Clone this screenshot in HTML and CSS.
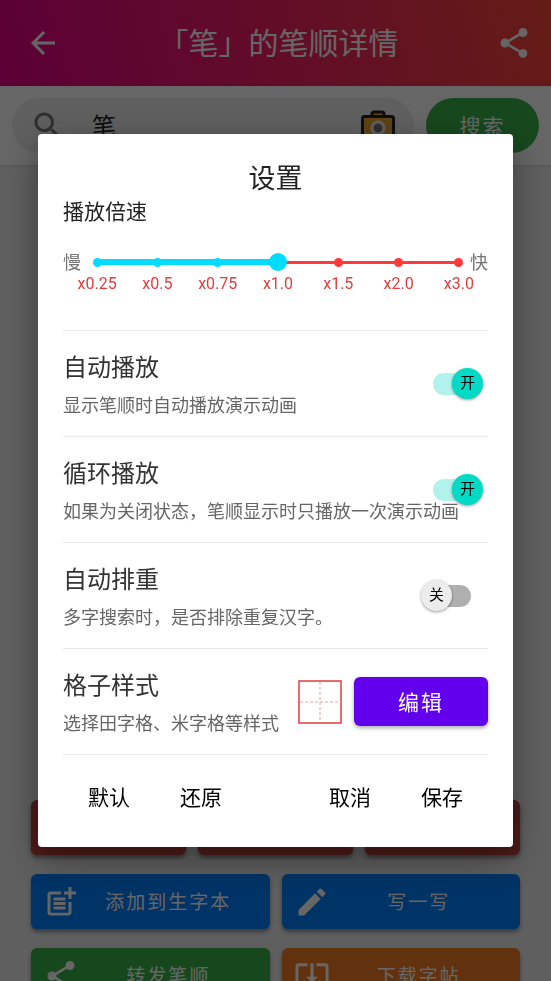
FILE: index.html
```html
<!DOCTYPE html>
<html lang="zh-CN">
<head>
<meta charset="utf-8">
<meta name="viewport" content="width=device-width, initial-scale=1">
<title>「笔」的笔顺详情</title>
<link rel="stylesheet" href="styles.css">
</head>
<body>
<div class="app">
  <header class="topbar">
    <button class="icon-button" type="button" aria-label="返回">
      <svg class="icon" viewBox="0 0 24 24"><path d="M20 11H7.83l5.59-5.59L12 4l-8 8 8 8 1.41-1.41L7.83 13H20v-2z"/></svg>
    </button>
    <h1 class="topbar-title">「笔」的笔顺详情</h1>
    <button class="icon-button" type="button" aria-label="分享">
      <svg class="icon" viewBox="0 0 24 24"><path d="M18 16.08c-.76 0-1.44.3-1.96.77L8.91 12.7c.05-.23.09-.46.09-.7s-.04-.47-.09-.7l7.05-4.11c.54.5 1.25.81 2.04.81 1.66 0 3-1.34 3-3s-1.34-3-3-3-3 1.34-3 3c0 .24.04.47.09.7L8.04 9.81C7.5 9.31 6.79 9 6 9c-1.66 0-3 1.34-3 3s1.34 3 3 3c.79 0 1.5-.31 2.04-.81l7.12 4.16c-.05.21-.08.43-.08.65 0 1.61 1.31 2.92 2.92 2.92s2.92-1.31 2.92-2.92-1.31-2.92-2.92-2.92z"/></svg>
    </button>
  </header>

  <form class="search">
    <div class="search-field">
      <svg class="search-icon" viewBox="0 0 24 24"><path d="M15.5 14h-.79l-.28-.27C15.41 12.59 16 11.11 16 9.5 16 5.91 13.09 3 9.5 3S3 5.91 3 9.5 5.91 16 9.5 16c1.61 0 3.09-.59 4.23-1.57l.27.28v.79l5 4.99L20.49 19l-4.99-5zm-6 0C7.01 14 5 11.99 5 9.5S7.01 5 9.5 5 14 7.01 14 9.5 11.99 14 9.5 14z"/></svg>
      <input class="search-input" type="text" value="笔" aria-label="搜索汉字">
      <svg class="camera" viewBox="0 0 34 32">
        <path d="M11 6V4q0-2 2-2h8q2 0 2 2v2" fill="#f0a830" stroke="#222" stroke-width="3"/>
        <rect x="1.5" y="6.5" width="31" height="24" rx="2" fill="#f0a830" stroke="#222" stroke-width="3"/>
        <circle cx="17" cy="18" r="6" fill="#777" stroke="#eee" stroke-width="3"/>
      </svg>
    </div>
    <button class="search-submit" type="submit">搜索</button>
  </form>

  <main class="content">
    <div class="board"></div>
    <div class="actions actions-three">
      <button class="action red" type="button" aria-label="上一笔"></button>
      <button class="action red" type="button" aria-label="播放"></button>
      <button class="action red" type="button" aria-label="下一笔"></button>
    </div>
    <div class="actions actions-two">
      <button class="action blue" type="button">
        <svg class="icon" viewBox="0 0 24 24"><path d="M17 19.22H5V7h7V5H5c-1.1 0-2 .9-2 2v12c0 1.1.9 2 2 2h12c1.1 0 2-.9 2-2v-7h-2v7.22z"/><path d="M19 2h-2v3h-3v2h3v3h2V7h3V5h-3V2zM7 9h8v2H7zM7 12h8v2H7zM7 15h8v2H7z"/></svg>
        <span class="action-text">添加到生字本</span>
      </button>
      <button class="action blue" type="button">
        <svg class="icon" viewBox="0 0 24 24"><path d="M3 17.25V21h3.75L17.81 9.94l-3.75-3.75L3 17.25zM20.71 7.04c.39-.39.39-1.02 0-1.41l-2.34-2.34c-.39-.39-1.02-.39-1.41 0l-1.83 1.83 3.75 3.75 1.83-1.83z"/></svg>
        <span class="action-text">写一写</span>
      </button>
      <button class="action green" type="button">
        <svg class="icon" viewBox="0 0 24 24"><path d="M18 16.08c-.76 0-1.44.3-1.96.77L8.91 12.7c.05-.23.09-.46.09-.7s-.04-.47-.09-.7l7.05-4.11c.54.5 1.25.81 2.04.81 1.66 0 3-1.34 3-3s-1.34-3-3-3-3 1.34-3 3c0 .24.04.47.09.7L8.04 9.81C7.5 9.31 6.79 9 6 9c-1.66 0-3 1.34-3 3s1.34 3 3 3c.79 0 1.5-.31 2.04-.81l7.12 4.16c-.05.21-.08.43-.08.65 0 1.61 1.31 2.92 2.92 2.92s2.92-1.31 2.92-2.92-1.31-2.92-2.92-2.92z"/></svg>
        <span class="action-text">转发笔顺</span>
      </button>
      <button class="action orange" type="button">
        <svg class="icon" viewBox="0 0 24 24"><path d="M12 16.5l4-4h-3v-9h-2v9H8l4 4zm9-13h-6v1.99h6v14.03H3V5.49h6V3.5H3c-1.1 0-2 .9-2 2v14c0 1.1.9 2 2 2h18c1.1 0 2-.9 2-2v-14c0-1.1-.9-2-2-2z"/></svg>
        <span class="action-text">下载字帖</span>
      </button>
    </div>
  </main>
</div>

<div class="backdrop">
  <section class="dialog" role="dialog" aria-modal="true" aria-labelledby="dialog-title">
    <h2 class="dialog-title" id="dialog-title">设置</h2>
    <label class="speed-title" for="speed">播放倍速</label>
    <div class="speed">
      <span class="speed-end">慢</span>
      <div class="slider">
        <div class="slider-line"><div class="slider-fill"></div></div>
        <ol class="stops">
          <li class="stop passed">x0.25</li>
          <li class="stop passed">x0.5</li>
          <li class="stop passed">x0.75</li>
          <li class="stop passed">x1.0</li>
          <li class="stop">x1.5</li>
          <li class="stop">x2.0</li>
          <li class="stop">x3.0</li>
        </ol>
        <input class="slider-input" id="speed" type="range" min="0" max="6" step="1" value="3">
      </div>
      <span class="speed-end">快</span>
    </div>

    <div class="setting">
      <div class="setting-text">
        <h3 class="setting-name">自动播放</h3>
        <p class="setting-note">显示笔顺时自动播放演示动画</p>
      </div>
      <label class="switch">
        <input class="switch-input" type="checkbox" aria-label="自动播放" checked>
        <span class="switch-thumb">开</span>
      </label>
    </div>
    <div class="setting">
      <div class="setting-text">
        <h3 class="setting-name">循环播放</h3>
        <p class="setting-note">如果为关闭状态，笔顺显示时只播放一次演示动画</p>
      </div>
      <label class="switch">
        <input class="switch-input" type="checkbox" aria-label="循环播放" checked>
        <span class="switch-thumb">开</span>
      </label>
    </div>
    <div class="setting">
      <div class="setting-text">
        <h3 class="setting-name">自动排重</h3>
        <p class="setting-note">多字搜索时，是否排除重复汉字。</p>
      </div>
      <label class="switch">
        <input class="switch-input" type="checkbox" aria-label="自动排重">
        <span class="switch-thumb">关</span>
      </label>
    </div>
    <div class="setting">
      <div class="setting-text">
        <h3 class="setting-name">格子样式</h3>
        <p class="setting-note">选择田字格、米字格等样式</p>
      </div>
      <div class="grid-style">
        <svg class="grid-preview" viewBox="0 0 44 44" fill="none">
          <path d="M22 2v40M2 22h40" stroke="#eda0a0" stroke-dasharray="3 2"/>
          <rect x="1" y="1" width="42" height="42" stroke="#dc3c3c" stroke-width="1.5"/>
        </svg>
        <button class="edit" type="button">编辑</button>
      </div>
    </div>

    <footer class="dialog-actions">
      <button class="text-button" type="button">默认</button>
      <button class="text-button" type="button">还原</button>
      <button class="text-button push" type="button">取消</button>
      <button class="text-button" type="button">保存</button>
    </footer>
  </section>
</div>
</body>
</html>
```

FILE: styles.css
```css
* {
  box-sizing: border-box;
}

body {
  margin: 0;
  height: 100vh;
  overflow: hidden;
  background: #eee;
  color: #222;
  font-family: Roboto, "Noto Sans CJK SC", sans-serif;
}

button,
input {
  margin: 0;
  padding: 0;
  border: 0;
  background: none;
  color: inherit;
  font: inherit;
}

h1, h2, h3, p, ol {
  margin: 0;
  padding: 0;
  font-weight: 400;
}

.icon {
  display: block;
  flex: none;
  width: 36px;
  height: 36px;
  fill: currentColor;
}

.topbar {
  display: flex;
  align-items: center;
  justify-content: space-between;
  height: 86px;
  padding: 0 19px 0 25px;
  background: linear-gradient(75deg, #e6008a, #f52064 50%, #fa4838);
  color: #fff;
}

.topbar-title {
  padding-bottom: 4px;
  font-size: 30px;
}

.search {
  position: relative;
  display: flex;
  gap: 12px;
  padding: 12px;
  background: #fff;
  box-shadow: 0 1px 3px rgba(0, 0, 0, 0.1);
}

.search-field {
  display: flex;
  flex: 1;
  align-items: center;
  min-width: 0;
  height: 55px;
  padding: 0 19px 0 18px;
  border-radius: 28px;
  background: #eee;
}

.search-icon {
  flex: none;
  width: 36px;
  height: 36px;
  fill: #777;
}

.search-input {
  flex: 1;
  min-width: 0;
  padding: 0 0 2px 26px;
  font-size: 24px;
}

.camera {
  flex: none;
  width: 34px;
  height: 32px;
}

.search-submit {
  width: 113px;
  height: 55px;
  padding-bottom: 2px;
  border-radius: 28px;
  background: #3ab54a;
  color: #fff;
  font-size: 21px;
  letter-spacing: 2px;
}

.content {
  display: flex;
  flex-direction: column;
  gap: 19px;
  padding: 0 31px;
}

.board {
  height: 616px;
}

.actions {
  display: grid;
  gap: 19px 12px;
}

.actions-three {
  grid-template-columns: repeat(3, 1fr);
}

.actions-two {
  grid-template-columns: repeat(2, 1fr);
}

.action {
  display: flex;
  align-items: center;
  height: 55px;
  padding: 0 12px;
  border-radius: 6px;
  box-shadow: 0 3px 4px rgba(0, 0, 0, 0.4);
  color: #fff;
  font-size: 19px;
  letter-spacing: 2px;
}

.action-text {
  flex: 1;
  padding-bottom: 2px;
  text-align: center;
}

.red { background: #c34440; }
.blue { background: #0080ff; }
.green { background: #3ab54a; }
.orange { background: #f57d26; }

.backdrop {
  position: fixed;
  inset: 0;
  display: grid;
  place-items: center;
  padding: 0 38px;
  background: rgba(0, 0, 0, 0.6);
}

.dialog {
  width: 100%;
  padding: 25px 25px 24px;
  border-radius: 4px;
  background: #fff;
  box-shadow: 0 12px 36px rgba(0, 0, 0, 0.4);
}

.dialog-title {
  font-size: 27px;
  line-height: 40px;
  text-align: center;
}

.speed-title {
  display: block;
  font-size: 21px;
  line-height: 26px;
}

.speed {
  display: flex;
  padding: 28px 0 37px;
  border-bottom: 1px solid #e8e8e8;
}

.speed-end {
  color: #757575;
  font-size: 18px;
  line-height: 20px;
}

.slider {
  display: grid;
  flex: 1;
  margin: 0 2px 0 7px;
}

.slider-line,
.stops,
.slider-input {
  grid-area: 1 / 1;
}

.slider-line {
  display: flex;
  align-items: center;
  height: 18px;
  margin: 0 9px;
  background: linear-gradient(#ff3a3a, #ff3a3a) center / 100% 3px no-repeat;
}

.slider-fill {
  width: 50%;
  height: 6px;
  background: #00dcff;
}

.stops {
  display: grid;
  grid-template-columns: repeat(7, 1fr);
  margin: 0 -21px;
  list-style: none;
  color: #e53c3c;
  font-size: 16px;
  line-height: 18px;
}

.stop {
  display: flex;
  flex-direction: column;
  align-items: center;
  gap: 8px;
  padding-top: 5px;
}

.stop::before {
  content: "";
  width: 9px;
  height: 9px;
  border-radius: 50%;
  background: #ff3a3a;
}

.stop.passed::before {
  background: #00dcff;
}

.slider-input {
  z-index: 1;
  width: 100%;
  height: 18px;
  appearance: none;
}

.slider-input::-webkit-slider-thumb {
  width: 18px;
  height: 18px;
  border-radius: 50%;
  background: #00dcff;
  appearance: none;
}

.setting {
  display: grid;
  align-items: center;
  border-bottom: 1px solid #e8e8e8;
}

.setting-text,
.switch,
.grid-style {
  grid-area: 1 / 1;
}

.setting-text {
  padding: 17px 0 12px;
}

.setting-name {
  color: #333;
  font-size: 24px;
  line-height: 40px;
}

.setting-note {
  color: #666;
  font-size: 18px;
  line-height: 36px;
}

.switch {
  display: grid;
  align-items: center;
  justify-self: end;
  width: 62px;
  margin-right: 5px;
}

.switch-input {
  grid-area: 1 / 1;
  justify-self: center;
  width: 38px;
  height: 22px;
  border-radius: 11px;
  background: #b0b0b0;
  appearance: none;
}

.switch-thumb {
  z-index: 1;
  grid-area: 1 / 1;
  width: 31px;
  height: 31px;
  border-radius: 50%;
  background: #ececec;
  box-shadow: 0 1px 3px rgba(0, 0, 0, 0.4);
  color: #000;
  font-size: 15px;
  line-height: 31px;
  text-align: center;
}

.switch-input:checked {
  background: #b2f2ec;
}

.switch-input:checked + .switch-thumb {
  justify-self: end;
  background: #03dac5;
}

.grid-style {
  display: flex;
  align-items: center;
  justify-self: end;
  gap: 12px;
}

.grid-preview {
  width: 44px;
  height: 44px;
}

.edit {
  width: 134px;
  height: 49px;
  padding-bottom: 2px;
  border-radius: 6px;
  background: #6200ee;
  box-shadow: 0 2px 4px rgba(0, 0, 0, 0.35);
  color: #fff;
  font-size: 21px;
  letter-spacing: 2px;
}

.dialog-actions {
  display: flex;
  padding-top: 14px;
}

.text-button {
  height: 54px;
  padding: 0 25px;
  color: #000;
  font-size: 21px;
}

.push {
  margin-left: auto;
}
```
